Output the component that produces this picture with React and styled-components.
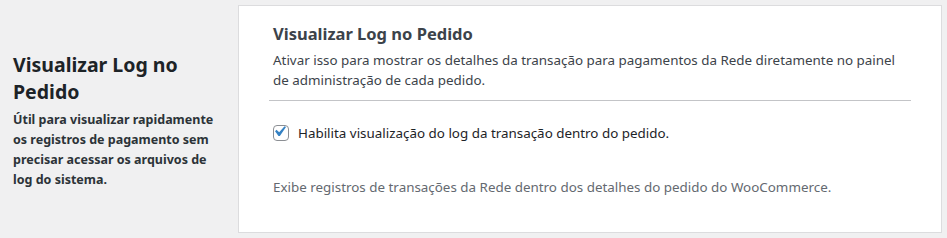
import React from "react";
import styled, { createGlobalStyle } from "styled-components";

const Global = createGlobalStyle`
  html, body { margin: 0; padding: 0; background: #f0f0f1; }
  body { font-family: "Noto Sans", "Open Sans", sans-serif; color: #1d2327; }
  * { box-sizing: border-box; }
`;

const Row = styled.div`
  display: flex;
  align-items: center;
  padding: 5px 5px 5px 0;
  width: 947px;
  height: 238px;
`;

const Side = styled.div`
  width: 238px;
  flex-shrink: 0;
  padding: 2px 20px 0 13px;
`;

const SideTitle = styled.h2`
  margin: 0 0 5px;
  font-size: 19.5px;
  line-height: 27px;
  font-weight: 700;
  color: #1d2327;
`;

const SideDesc = styled.p`
  margin: 0;
  font-size: 12.5px;
  line-height: 20px;
  font-weight: 700;
  color: #2c3338;
`;

const Card = styled.div`
  flex: 1;
  align-self: stretch;
  background: #fff;
  border: 1px solid #dcdcde;
  padding: 16px 30px 0 30px;
`;

const Section = styled.div`
  padding-left: 4px;
`;

const CardTitle = styled.h3`
  margin: 0 0 4px;
  font-size: 16.5px;
  line-height: 24px;
  font-weight: 700;
  color: #3c434a;
`;

const Text = styled.p`
  margin: 0;
  font-size: 13.4px;
  line-height: 20px;
  color: ${(p) => (p.$muted ? "#646970" : "#3c434a")};
`;

const Divider = styled.hr`
  border: 0;
  border-top: 1px solid #c3c4c7;
  margin: 10px 0 0;
`;

const CheckRow = styled.label`
  display: flex;
  align-items: center;
  gap: 9px;
  margin: 22px 0 34px;
  font-size: 13.4px;
  line-height: 20px;
  color: #1d2327;
`;

const Box = styled.span`
  width: 16px;
  height: 16px;
  border: 1px solid #8c8f94;
  border-radius: 4px;
  display: inline-flex;
  align-items: center;
  justify-content: center;
  background: #fff;
  flex-shrink: 0;
  overflow: visible;
`;

const Check = styled.svg`
  width: 21px;
  height: 21px;
  margin: -3px 0 0 -4px;
  flex-shrink: 0;
`;

export default function App() {
  return (
    <>
      <Global />
      <Row>
        <Side>
          <SideTitle>Visualizar Log no Pedido</SideTitle>
          <SideDesc>
            Útil para visualizar rapidamente os registros de pagamento sem
            precisar acessar os arquivos de log do sistema.
          </SideDesc>
        </Side>
        <Card>
          <Section>
            <CardTitle>Visualizar Log no Pedido</CardTitle>
            <Text>
              Ativar isso para mostrar os detalhes da transação para pagamentos
              da Rede diretamente no painel de administração de cada pedido.
            </Text>
          </Section>
          <Divider />
          <Section>
            <CheckRow>
              <Box>
                <Check viewBox="0 0 20 20">
                  <path
                    d="M14.83 4.89l1.34.94-5.81 8.38H9.02L5.78 9.67l1.34-1.25 2.57 2.4z"
                    fill="#3582c4"
                  />
                </Check>
              </Box>
              Habilita visualização do log da transação dentro do pedido.
            </CheckRow>
            <Text $muted>
              Exibe registros de transações da Rede dentro dos detalhes do
              pedido do WooCommerce.
            </Text>
          </Section>
        </Card>
      </Row>
    </>
  );
}
